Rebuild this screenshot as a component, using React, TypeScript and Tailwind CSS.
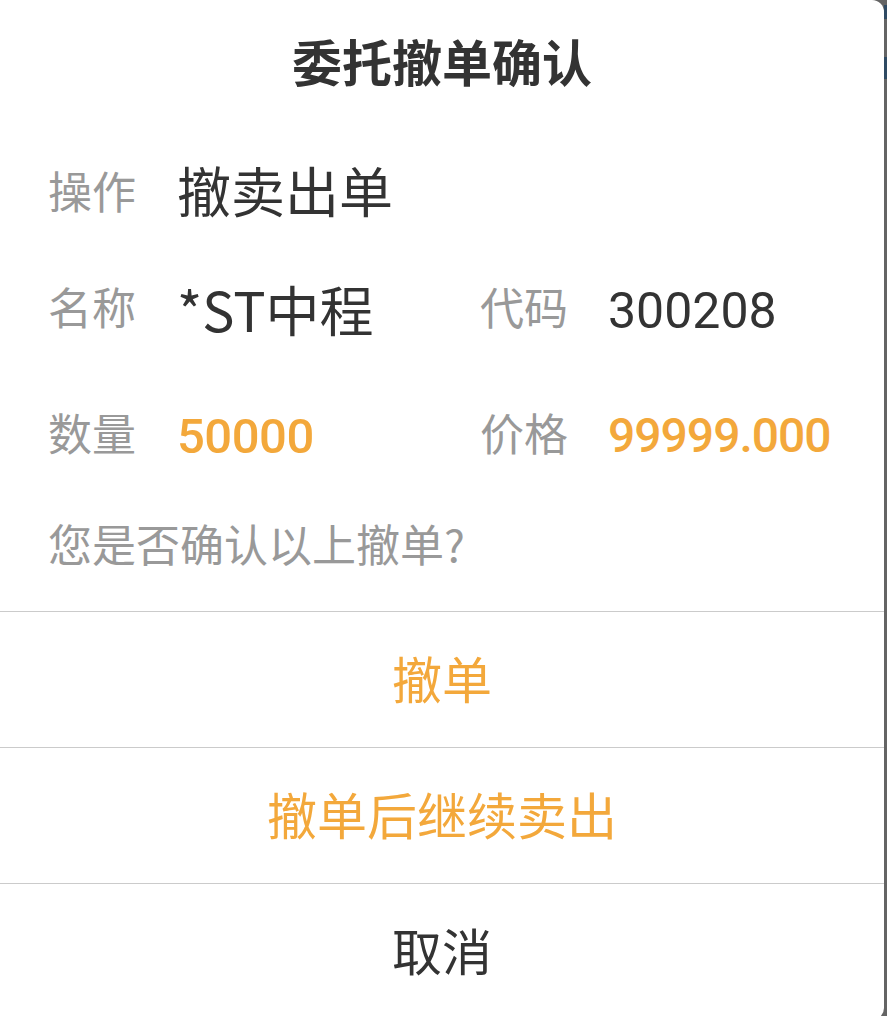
const CJK = "font-['Noto_Sans_CJK_SC','Noto_Sans',sans-serif]";
const NUM = "font-['Roboto','Noto_Sans_CJK_SC',sans-serif]";

interface ActionProps {
  label: string;
  tone: 'orange' | 'dark';
}

function ActionRow({ label, tone }: ActionProps) {
  return (
    <>
      <div className="h-px bg-[#cbcbcb]" />
      <button
        className={`h-[135px] w-full flex items-center justify-center pb-[6px] text-[50px] leading-none ${CJK} ${
          tone === 'orange' ? 'text-[#f3a83b]' : 'text-[#333333]'
        }`}
      >
        {label}
      </button>
    </>
  );
}

export default function App() {
  return (
    <div className="w-[887px] h-[1016px] overflow-hidden flex bg-[#646464]">
      <div className="w-[884px] h-[1020px] shrink-0 bg-white rounded-r-[12px] flex flex-col">
        <div className={`h-[128px] flex items-center justify-center pb-[8px] text-[50px] font-bold text-[#333333] leading-none ${CJK}`}>
          委托撤单确认
        </div>

        <div className="pl-[48px] grid grid-cols-[129px_303px_128px_1fr]">
          <div className={`h-[128px] flex items-center pb-[4px] text-[44px] text-[#999999] leading-none ${CJK}`}>操作</div>
          <div className={`col-span-3 h-[128px] flex items-center pb-[4px] text-[54px] text-[#333333] leading-none ${CJK}`}>撤卖出单</div>

          <div className={`h-[102px] flex items-center pb-[2px] text-[44px] text-[#999999] leading-none ${CJK}`}>名称</div>
          <div className={`h-[102px] flex items-center pt-[4px] text-[54px] text-[#333333] leading-none ${CJK}`}>*ST中程</div>
          <div className={`h-[102px] flex items-center pb-[2px] text-[44px] text-[#999999] leading-none ${CJK}`}>代码</div>
          <div className={`h-[102px] flex items-center pt-[8px] text-[50px] text-[#333333] leading-none ${NUM}`}>300208</div>

          <div className={`h-[152px] flex items-center pb-[4px] text-[44px] text-[#999999] leading-none ${CJK}`}>数量</div>
          <div className={`h-[152px] flex items-center pt-[4px] text-[49px] font-medium tracking-[-0.5px] text-[#f3a83b] leading-none ${NUM}`}>50000</div>
          <div className={`h-[152px] flex items-center pb-[4px] text-[44px] text-[#999999] leading-none ${CJK}`}>价格</div>
          <div className={`h-[152px] flex items-center pt-[4px] text-[48px] font-medium tracking-[-1px] text-[#f3a83b] leading-none ${NUM}`}>99999.000</div>
        </div>

        <div className={`h-[72px] pl-[48px] flex items-center pb-[6px] text-[44px] text-[#999999] leading-none ${CJK}`}>
          您是否确认以上撤单?
        </div>
        <div className="h-[29px]" />

        <ActionRow label="撤单" tone="orange" />
        <ActionRow label="撤单后继续卖出" tone="orange" />
        <ActionRow label="取消" tone="dark" />
      </div>
      <div className="flex-1 flex flex-col">
        <div className="h-[5px]" />
        <div className="h-[14px] bg-[#2f4a63]" />
        <div className="h-[38px]" />
        <div className="h-[22px] bg-[#2f4a63]" />
      </div>
    </div>
  );
}
